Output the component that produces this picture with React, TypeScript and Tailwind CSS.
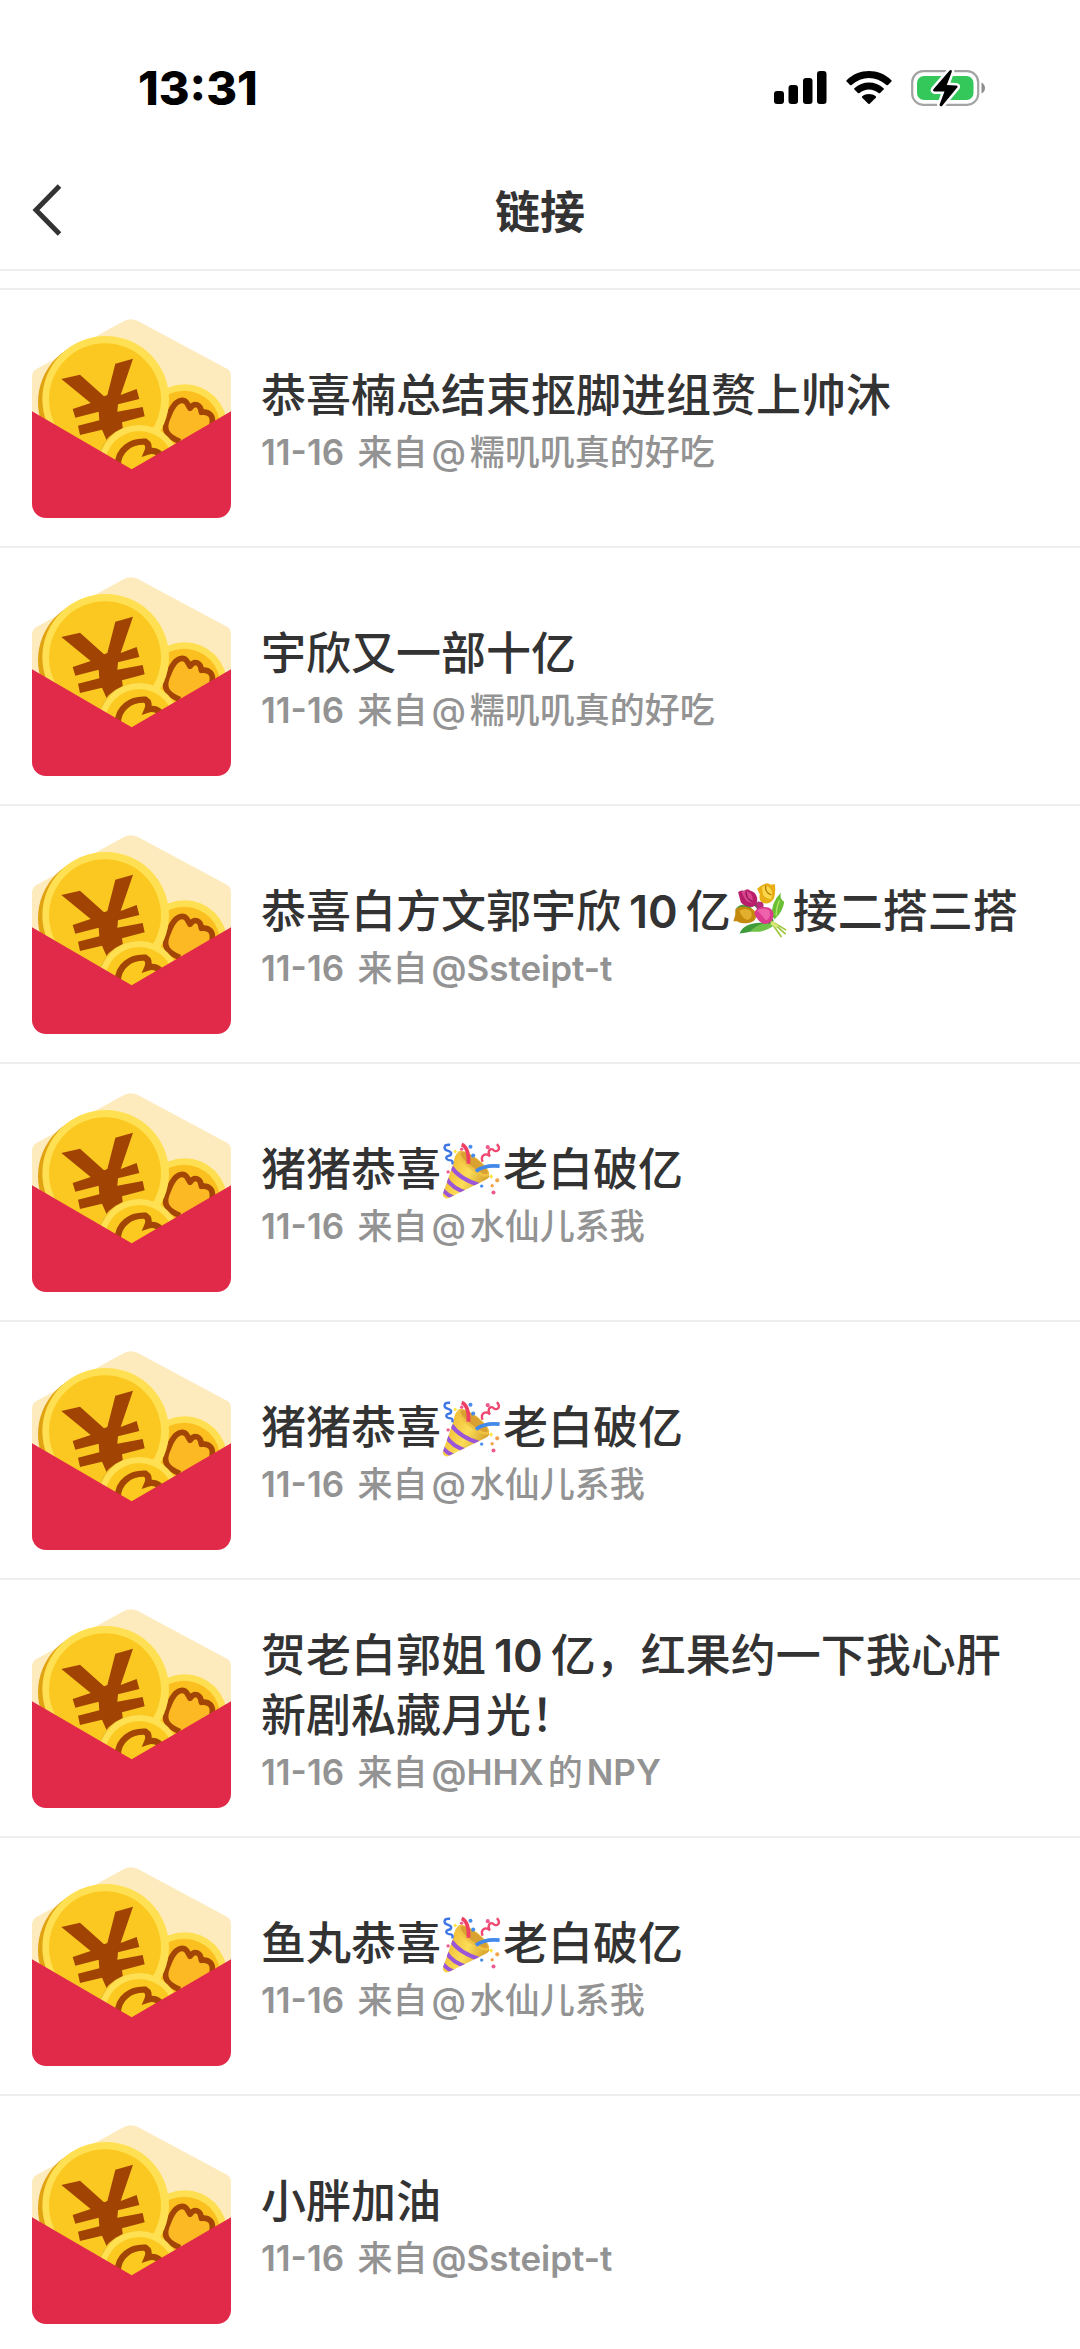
import type { ReactNode } from "react";

function PartyPopper() {
  return (
    <svg viewBox="15 6 183 183" role="img" aria-label="🎉" className="-mt-4 -mb-2 inline-block size-[62px] align-middle">
      <defs>
        <linearGradient id="cone" x1="0" y1="0.3" x2="1" y2="0.8">
          <stop offset="0" stopColor="#f0b52c" />
          <stop offset="0.5" stopColor="#fbdd58" />
          <stop offset="1" stopColor="#c98f1f" />
        </linearGradient>
        <clipPath id="coneClip">
          <path d="M68 46 Q54 56 52 80 L20 172 Q22 186 36 184 L146 130 Q160 122 157 116 Z" />
        </clipPath>
      </defs>
      <path d="M68 46 Q54 56 52 80 L20 172 Q22 186 36 184 L146 130 Q160 122 157 116 Z" fill="url(#cone)" />
      <g clipPath="url(#coneClip)" fill="none" stroke="#9a55d8" strokeWidth="12">
        <path d="M46 92 Q70 128 132 146" />
        <path d="M30 124 Q48 156 94 168" />
        <path d="M16 152 Q30 176 60 184" />
      </g>
      <ellipse cx="111" cy="82" rx="57" ry="19" transform="rotate(38 111 82)" fill="#f0c244" />
      <ellipse cx="113" cy="80" rx="50" ry="13" transform="rotate(38 113 80)" fill="#d9a032" />
      <g fill="none" strokeLinecap="butt">
        <path d="M96 82 Q98 34 76 25" stroke="#ef3f63" strokeWidth="11" />
        <path d="M118 104 Q145 84 188 89" stroke="#4289ea" strokeWidth="11" />
        <path d="M42 26 C20 24 22 40 36 44 C50 48 46 58 36 59 C26 62 30 72 44 72 Q52 74 48 84" stroke="#3e76e5" strokeWidth="7" />
        <path d="M180 24 C196 42 176 50 168 40 C156 34 152 52 160 60 C146 48 130 58 138 76" stroke="#ef4770" strokeWidth="7" />
      </g>
      <g fill="#ef5b91">
        <circle cx="76" cy="39" r="5" />
        <circle cx="153" cy="33" r="6" />
        <circle cx="36" cy="106" r="5" />
        <circle cx="170" cy="167" r="6" />
      </g>
      <g fill="#478ded">
        <circle cx="102" cy="32" r="6" />
        <circle cx="110" cy="58" r="6" />
        <circle cx="135" cy="148" r="5" />
      </g>
      <g fill="#f2a34a">
        <circle cx="166" cy="147" r="5" />
        <circle cx="181" cy="131" r="6" />
      </g>
      <path d="M57 40l6 6-6 6-6-6zM163 113l6 7-6 7-6-7z" fill="#ffe544" />
    </svg>
  );
}

function Bouquet() {
  return (
    <svg viewBox="21 2 183 183" role="img" aria-label="💐" className="-mt-4 -mb-2 inline-block size-[62px] align-middle">
      <path d="M142 110 Q138 70 168 40 Q164 60 178 66 Q176 92 150 118 Z" fill="#6abf35" />
      <path d="M154 108 Q156 78 164 62" fill="none" stroke="#b4e36a" strokeWidth="4" />
      <path d="M34 90 Q44 70 76 76 L84 90 Z" fill="#4f9b32" />
      <path d="M46 160 Q58 130 106 128 L130 128 Q100 156 46 160 Z" fill="#3f9a3a" />
      <path d="M78 154 Q98 130 140 126 L152 132 Q122 160 78 154 Z" fill="#6fc248" />
      <path d="M96 70 L140 126" stroke="#2f6b2c" strokeWidth="18" />
      <g fill="none" stroke="#9cc63c" strokeWidth="5">
        <path d="M138 122 L184 150" />
        <path d="M138 122 L182 162" />
        <path d="M136 122 L170 170" />
      </g>
      <path d="M140 128 L158 140" stroke="#d6e87a" strokeWidth="10" />
      <path d="M42 38 Q50 30 60 34 Q70 24 78 34 Q92 36 98 54 Q102 76 84 82 Q60 82 50 68 Z" fill="#b81e6c" />
      <path d="M52 38 Q60 30 74 38 Q88 44 84 70 Q66 68 60 54 Z" fill="#d8458c" />
      <path d="M66 36 Q62 54 84 66" fill="none" stroke="#8f1458" strokeWidth="4" />
      <path d="M98 28 Q110 18 120 14 Q130 8 138 16 L150 14 Q154 34 148 56 Q136 76 114 70 Q102 62 106 44 Z" fill="#e9ad16" />
      <path d="M112 24 Q124 14 134 24 Q146 34 140 58 Q124 58 116 46 Z" fill="#fbd84a" />
      <path d="M124 18 Q118 36 140 46" fill="none" stroke="#b77b08" strokeWidth="4" />
      <path d="M34 88 Q52 76 74 84 Q92 86 96 106 Q94 128 68 130 Q44 130 40 124 L28 124 Q36 106 34 88 Z" fill="#c48a0e" />
      <path d="M46 92 Q64 82 80 94 Q88 112 70 120 Q52 114 46 92 Z" fill="#e3b02e" />
      <circle cx="106" cy="77" r="11" fill="#b62b7c" />
      <path d="M90 102 Q92 82 120 82 Q146 82 146 106 Q144 130 122 132 Q104 130 90 102 Z" fill="#db3a8e" />
      <path d="M98 92 Q118 80 134 92 Q142 110 124 122 Q112 104 98 92 Z" fill="#ee62ab" />
    </svg>
  );
}

function RedPacket() {
  return (
    <svg viewBox="0 0 597 597" className="size-[199px] shrink-0 rounded-[14px]" aria-hidden="true">
      <path d="M0 175 Q0 158 12 151 L265 12 Q297 -10 329 12 L585 149 Q597 156 597 172 V420 H0 Z" fill="#feebbd" />
      <g>
        <circle cx="458" cy="324" r="128" fill="#ffdf52" />
        <circle cx="456" cy="324" r="109" fill="#fbc01f" />
        <path d="M400 352 C392 310 418 250 452 240 C466 246 470 256 474 266 C486 252 502 256 508 276 C526 274 538 286 540 310 L520 352 L440 366 Z" fill="#fcb924" />
        <path d="M444 368 C406 352 388 334 410 290 C422 258 440 236 460 247 C466 252 470 260 474 268 C488 248 506 256 508 280 C530 276 546 290 540 316" fill="none" stroke="#a24505" strokeWidth="17" strokeLinejoin="round" />
      </g>
      <circle cx="206" cy="250" r="188" fill="#e2a313" />
      <circle cx="221" cy="241" r="190" fill="#ffe053" />
      <circle cx="219" cy="241" r="168" fill="#fac820" />
      <path
        transform="translate(-6 -12)"
        d="M94 192 L150 179 L222 244 L232 240 L256 146 L309 131 L272 240 L320 222 L328 252 L264 268 L262 290 L338 276 L344 304 L276 322 L284 380 L232 380 L216 344 L150 360 L144 332 L208 316 L206 290 L136 308 L128 282 L182 264 Z"
        fill="#a04303"
      />
      <circle cx="318" cy="442" r="124" fill="#f0c02a" />
      <circle cx="322" cy="440" r="122" fill="#ffe053" />
      <circle cx="322" cy="440" r="104" fill="#fbc920" />
      <path d="M257 440 C258 392 296 366 340 368 C350 374 352 384 346 398 C364 392 382 398 388 414" fill="none" stroke="#a24505" strokeWidth="19" />
      <path d="M0 277 L299 451 L597 277 V597 H0 Z" fill="#e12a49" />
    </svg>
  );
}

// digits inside a title are a bit heavier and stand off the chinese characters
function Num({ children }: { children: ReactNode }) {
  return <span className="mx-2 font-semibold">{children}</span>;
}

function Latin({ children }: { children: ReactNode }) {
  return <span className="mx-1 font-semibold">{children}</span>;
}

function At() {
  return <span className="mx-1">@</span>;
}

type Item = { title: ReactNode; from: ReactNode };

const items: Item[] = [
  { title: "恭喜楠总结束抠脚进组赘上帅沐", from: <><At />糯叽叽真的好吃</> },
  { title: "宇欣又一部十亿", from: <><At />糯叽叽真的好吃</> },
  { title: <>恭喜白方文郭宇欣<Num>10</Num>亿<Bouquet />接二搭三搭</>, from: <Latin>@Ssteipt-t</Latin> },
  { title: <>猪猪恭喜<PartyPopper />老白破亿</>, from: <><At />水仙儿系我</> },
  { title: <>猪猪恭喜<PartyPopper />老白破亿</>, from: <><At />水仙儿系我</> },
  { title: <>贺老白郭姐<Num>10</Num>亿，红果约一下我心肝<wbr />新剧私藏月光！</>, from: <><Latin>@HHX</Latin>的<Latin>NPY</Latin></> },
  { title: <>鱼丸恭喜<PartyPopper />老白破亿</>, from: <><At />水仙儿系我</> },
  { title: "小胖加油", from: <Latin>@Ssteipt-t</Latin> },
];

export default function App() {
  return (
    <div
      lang="zh-CN"
      className="flex h-screen flex-col overflow-hidden bg-white font-['Inter','Noto_Sans_CJK_SC',sans-serif] text-[#333333]"
    >
      <div className="flex h-[150px] shrink-0 items-center justify-between pt-[25px] pr-[94px] pl-[138px] text-black">
        <span className="text-[47px] leading-none font-extrabold">13:31</span>
        <div className="flex items-center">
          <svg width="53" height="36" viewBox="0 0 53 36" aria-hidden="true">
            <rect x="0" y="21" width="10" height="13" rx="3" />
            <rect x="14.5" y="15" width="9.5" height="19" rx="3" />
            <rect x="29" y="8" width="9.5" height="26" rx="3" />
            <rect x="43" y="1" width="9.5" height="33" rx="3" />
          </svg>
          <svg width="46" height="36" viewBox="0 0 46 36" className="ml-[19px]" aria-hidden="true">
            <path d="M0.6 10.2 C13 -2 33 -2 45.4 10.2 Q46 11 45.4 11.6 L42 15 Q41.2 15.6 40.4 15 C30 5.5 16 5.5 5.6 15 Q4.8 15.6 4 15 L0.6 11.6 Q0 11 0.6 10.2 Z" />
            <path d="M8.4 18.2 C16.5 10.5 29.5 10.5 37.6 18.2 Q38.2 19 37.6 19.6 L34.1 23 Q33.3 23.6 32.5 23 C27 18.2 19 18.2 13.5 23 Q12.7 23.6 11.9 23 L8.4 19.6 Q7.8 19 8.4 18.2 Z" />
            <path d="M16.2 26.3 C20 23.3 26 23.3 29.8 26.3 Q30.4 27 29.8 27.7 L23.7 33.7 Q23 34.3 22.3 33.7 L16.2 27.7 Q15.6 27 16.2 26.3 Z" />
          </svg>
          <svg width="75" height="38" viewBox="0 0 75 38" className="ml-[19px]" aria-hidden="true">
            <rect x="1.2" y="2.2" width="66" height="33.6" rx="11" fill="none" stroke="#a3a3a3" strokeWidth="2.2" />
            <path d="M70.5 13.5 Q74 15.5 74 19 Q74 22.5 70.5 24.5 Z" fill="#8e8e8e" />
            <rect x="6" y="7" width="56.5" height="24" rx="7" fill="#34c759" />
            <path
              d="M40.8 1.6 Q39.6 0.4 38 2.2 L22.6 20 Q21.2 22.2 23.5 22.4 L33.5 22.4 L28.6 35.6 Q28.4 38 31 37 L46.2 18.6 Q47.4 16.6 45.2 16.4 L35.8 16 L40.8 2.8 Z"
              stroke="#ffffff"
              strokeWidth="5"
              paintOrder="stroke"
              strokeLinejoin="round"
            />
          </svg>
        </div>
      </div>

      <header className="grid h-[121px] shrink-0 grid-cols-[1fr_auto_1fr] items-center border-b-2 border-[#eeeeee] px-8">
        <button type="button" aria-label="返回" className="justify-self-start">
          <svg width="31" height="52" viewBox="0 0 31 52" fill="none" stroke="#333333" strokeWidth="5" aria-hidden="true">
            <path d="M27.5 2 L4 26 L27.5 50" />
          </svg>
        </button>
        <h1 className="pt-1.5 text-[45px] leading-none font-bold">链接</h1>
      </header>

      <main className="mt-[17px] border-t-2 border-[#eeeeee]">
        <ul>
          {items.map((item, i) => (
            <li key={i} className="border-b-2 border-[#eeeeee]">
              <a href="#" className="flex items-center gap-[30px] pt-[29px] pr-12 pb-7 pl-8">
                <RedPacket />
                <div className="min-w-0 flex-1 font-medium">
                  <h2 className="text-[45px] leading-[60px]">{item.title}</h2>
                  <p className="mt-1.5 text-[35px] leading-[40px] text-[#939393]">
                    <time className="mr-1 font-semibold">11-16</time> 来自{item.from}
                  </p>
                </div>
              </a>
            </li>
          ))}
        </ul>
      </main>
    </div>
  );
}
